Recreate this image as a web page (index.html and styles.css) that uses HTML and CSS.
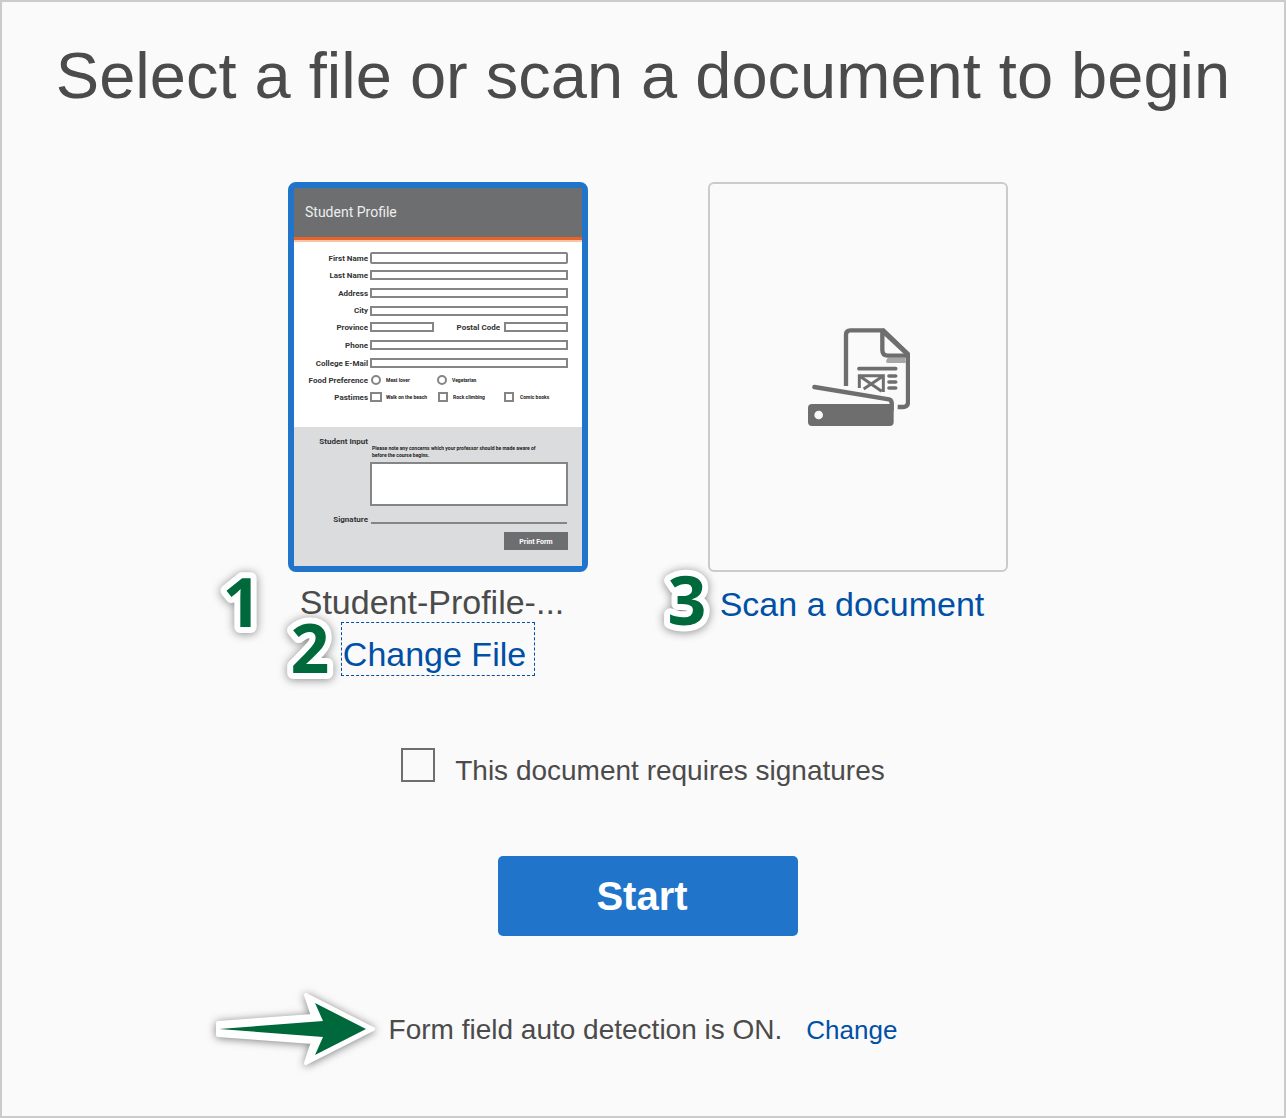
FILE: index.html
```html
<!DOCTYPE html>
<html lang="en">
<head>
<meta charset="utf-8">
<meta name="viewport" content="width=device-width, initial-scale=1">
<title>Select a file or scan a document</title>
<link rel="stylesheet" href="styles.css">
</head>
<body>
<main class="panel">
  <h1 class="title">Select a file or scan a document to begin</h1>

  <div class="choices">
    <section class="choice">
      <div class="card card-selected">
        <svg class="preview" viewBox="0 0 288 378" role="img" aria-label="Student Profile form preview">
          <rect width="288" height="378" fill="#fff"/>
          <rect width="288" height="49" fill="#6d6e70"/>
          <rect y="49" width="288" height="3" fill="#e8632a"/>
          <rect y="52" width="288" height="2" fill="#fbc3a8"/>
          <text class="form-title" x="11" y="29">Student Profile</text>
          <rect y="239" width="288" height="139" fill="#dbdcde"/>
          <g class="form-label">
            <text x="74" y="73">First Name</text>
            <text x="74" y="90">Last Name</text>
            <text x="74" y="108">Address</text>
            <text x="74" y="125">City</text>
            <text x="74" y="142">Province</text>
            <text x="206" y="142">Postal Code</text>
            <text x="74" y="160">Phone</text>
            <text x="74" y="178">College E-Mail</text>
            <text x="74" y="195">Food Preference</text>
            <text x="74" y="212">Pastimes</text>
            <text x="74" y="256">Student Input</text>
            <text x="74" y="334">Signature</text>
          </g>
          <g class="form-box">
            <rect x="77" y="65" width="196" height="10" rx="1"/>
            <rect x="77" y="83" width="196" height="8"/>
            <rect x="77" y="101" width="196" height="8"/>
            <rect x="77" y="119" width="196" height="8"/>
            <rect x="77" y="135" width="62" height="8"/>
            <rect x="211" y="135" width="62" height="8"/>
            <rect x="77" y="153" width="196" height="8"/>
            <rect x="77" y="171" width="196" height="8"/>
            <circle cx="82" cy="192" r="4"/>
            <circle cx="148" cy="192" r="4"/>
            <rect x="77" y="205" width="10" height="8"/>
            <rect x="145" y="205" width="8" height="8"/>
            <rect x="211" y="205" width="8" height="8"/>
            <rect x="77" y="275" width="196" height="42"/>
            <path d="M77 335H273"/>
          </g>
          <g class="form-note">
            <text x="92" y="194">Meat lover</text>
            <text x="158" y="194">Vegetarian</text>
            <text x="92" y="211">Walk on the beach</text>
            <text x="159" y="211">Rock climbing</text>
            <text x="226" y="211">Comic books</text>
            <text x="78" y="262">Please note any concerns which your professor should be made aware of</text>
            <text x="78" y="269">before the course begins.</text>
          </g>
          <rect x="210" y="344" width="64" height="18" fill="#6d6e70"/>
          <text class="form-button" x="242" y="356">Print Form</text>
        </svg>
      </div>
      <p class="caption">Student-Profile-...</p>
      <a class="change-file" href="#file">Change File</a>
      <svg class="badge badge-one" viewBox="0 0 60 68"><text x="30" y="58">1</text></svg>
      <svg class="badge badge-two" viewBox="0 0 60 68"><text x="30" y="58">2</text></svg>
    </section>

    <section class="choice">
      <div class="card">
        <svg class="scan-icon" viewBox="49 51 312 300" aria-hidden="true">
          <g fill="none" stroke="#6e6e6e" stroke-width="13">
            <path d="M169 228V74Q169 61 182 61H281L355 132V276Q355 291 340 291H324"/>
            <path d="M278 61V120Q278 137 295 137H356"/>
            <path d="M276 60L355 134" stroke-width="14"/>
          </g>
          <path d="M294 144H348V159H294Q289 159 289 152Z" fill="#a6a6a6"/>
          <path d="M208 176H318" stroke="#6e6e6e" stroke-width="11" stroke-linecap="round"/>
          <path d="M298 198H318M298 216H318M298 234H318" stroke="#6e6e6e" stroke-width="11" stroke-linecap="round"/>
          <path d="M209 234V197H281V246M214 201L276 244M276 201L222 237" fill="none" stroke="#6e6e6e" stroke-width="9"/>
          <path d="M74 231L298 268Q306 270 306 280V300" fill="none" stroke="#6e6e6e" stroke-width="13" stroke-linecap="round"/>
          <path fill-rule="evenodd" fill="#6e6e6e" d="M67 282H300L312 276V336Q312 348 300 348H67Q55 348 55 336V294Q55 282 67 282ZM87 302A13 13 0 1 0 87 328A13 13 0 1 0 87 302Z"/>
        </svg>
      </div>
      <a class="caption scan-link" href="#scan">Scan a document</a>
      <svg class="badge badge-three" viewBox="0 0 60 68"><text x="30" y="58">3</text></svg>
    </section>
  </div>

  <div class="signatures">
    <input class="tick" type="checkbox" id="signatures">
    <label class="tick-label" for="signatures">This document requires signatures</label>
  </div>

  <button class="start" type="button">Start</button>

  <p class="detection">
    <svg class="arrow" viewBox="0 0 184 92" aria-hidden="true">
      <path d="M13 39L108 32L101 11L168 45L101 79L108 58L13 51Z" fill="#fff" stroke="#fff" stroke-width="4" stroke-linejoin="round"/>
      <path d="M14 45L118 37L110 19L161 45L110 71L118 53Z" fill="#00693c"/>
    </svg>
    <span>Form field auto detection is ON.</span>
    <a class="change-detection" href="#detection">Change</a>
  </p>
</main>
</body>
</html>
```
FILE: styles.css
```css
* {
  box-sizing: border-box;
}

body {
  margin: 0;
  background: #fafafa;
  color: #4b4b4b;
  font-family: "Liberation Sans", Arial, sans-serif;
}

a {
  color: #0050a5;
  text-decoration: none;
}

.panel {
  display: flex;
  flex-direction: column;
  align-items: center;
  min-height: 100vh;
  padding: 38px 16px;
  border: 2px solid #cbcbcb;
}

.title {
  margin: 0 0 70px;
  font-size: 65px;
  font-weight: 400;
  line-height: 72px;
  text-align: center;
}

.choices {
  display: flex;
  flex-wrap: wrap;
  justify-content: center;
  gap: 120px;
  padding-left: 10px;
  margin-bottom: 72px;
}

.choice {
  position: relative;
  display: flex;
  flex-direction: column;
  align-items: center;
  width: 300px;
}

.card {
  display: flex;
  align-items: center;
  justify-content: center;
  width: 100%;
  height: 390px;
  border: 2px solid #cbcbcb;
  border-radius: 6px;
}

.card-selected {
  border: 6px solid #2074ca;
  border-radius: 8px;
}

.preview {
  width: 100%;
  height: 100%;
}

.preview text {
  font-family: Roboto, "Liberation Sans", sans-serif;
  font-weight: 700;
}

.preview .form-title {
  fill: #eee;
  font-size: 14px;
  font-weight: 400;
}

.form-label {
  fill: #333;
  font-size: 8px;
  text-anchor: end;
}

.form-note {
  fill: #222;
  font-size: 5px;
}

.preview .form-button {
  fill: #fff;
  font-size: 7px;
  text-anchor: middle;
}

.form-box {
  fill: #fff;
  stroke: #858585;
  stroke-width: 2px;
}

.scan-icon {
  width: 104px;
  height: 100px;
}

.caption {
  margin: 10px 0 0;
  padding-right: 12px;
  font-size: 34px;
  line-height: 40px;
  white-space: nowrap;
}

.scan-link {
  margin-top: 12px;
}

.change-file {
  padding: 10px 8px 0 1px;
  border: 1px dashed #0050a5;
  font-size: 34px;
  line-height: 42px;
}

.badge {
  position: absolute;
  width: 60px;
  height: 68px;
  overflow: visible;
  fill: #00693c;
  stroke: #fff;
  stroke-width: 12px;
  stroke-linejoin: round;
  paint-order: stroke fill;
  font-family: "Open Sans", sans-serif;
  font-size: 68px;
  font-weight: 700;
  text-anchor: middle;
  filter: drop-shadow(0 1px 5px rgba(0, 0, 0, 0.45));
}

.badge-one {
  top: 387px;
  left: -76px;
}

.badge-two {
  top: 433px;
  left: -8px;
}

.badge-three {
  top: 385px;
  left: -51px;
}

.signatures {
  display: flex;
  gap: 20px;
  margin-bottom: 69px;
}

.tick {
  appearance: none;
  width: 34px;
  height: 34px;
  margin: 0;
  border: 2px solid #6e6e6e;
  background: #fafafa;
}

.tick:checked {
  background: #2074ca;
}

.tick-label {
  padding-top: 7px;
  font-size: 28px;
  line-height: 32px;
}

.start {
  width: 300px;
  height: 80px;
  margin: 0 0 78px 10px;
  padding: 0 12px 0 0;
  border: 0;
  border-radius: 5px;
  background: #2074ca;
  color: #fff;
  font-family: inherit;
  font-size: 40px;
  font-weight: 700;
}

.detection {
  position: relative;
  display: flex;
  align-items: baseline;
  gap: 24px;
  margin: 0;
  font-size: 28px;
  line-height: 32px;
}

.change-detection {
  font-size: 26px;
}

.arrow {
  position: absolute;
  top: -30px;
  right: 100%;
  width: 184px;
  height: 92px;
  filter: drop-shadow(0 1px 4px rgba(0, 0, 0, 0.5));
}
```
